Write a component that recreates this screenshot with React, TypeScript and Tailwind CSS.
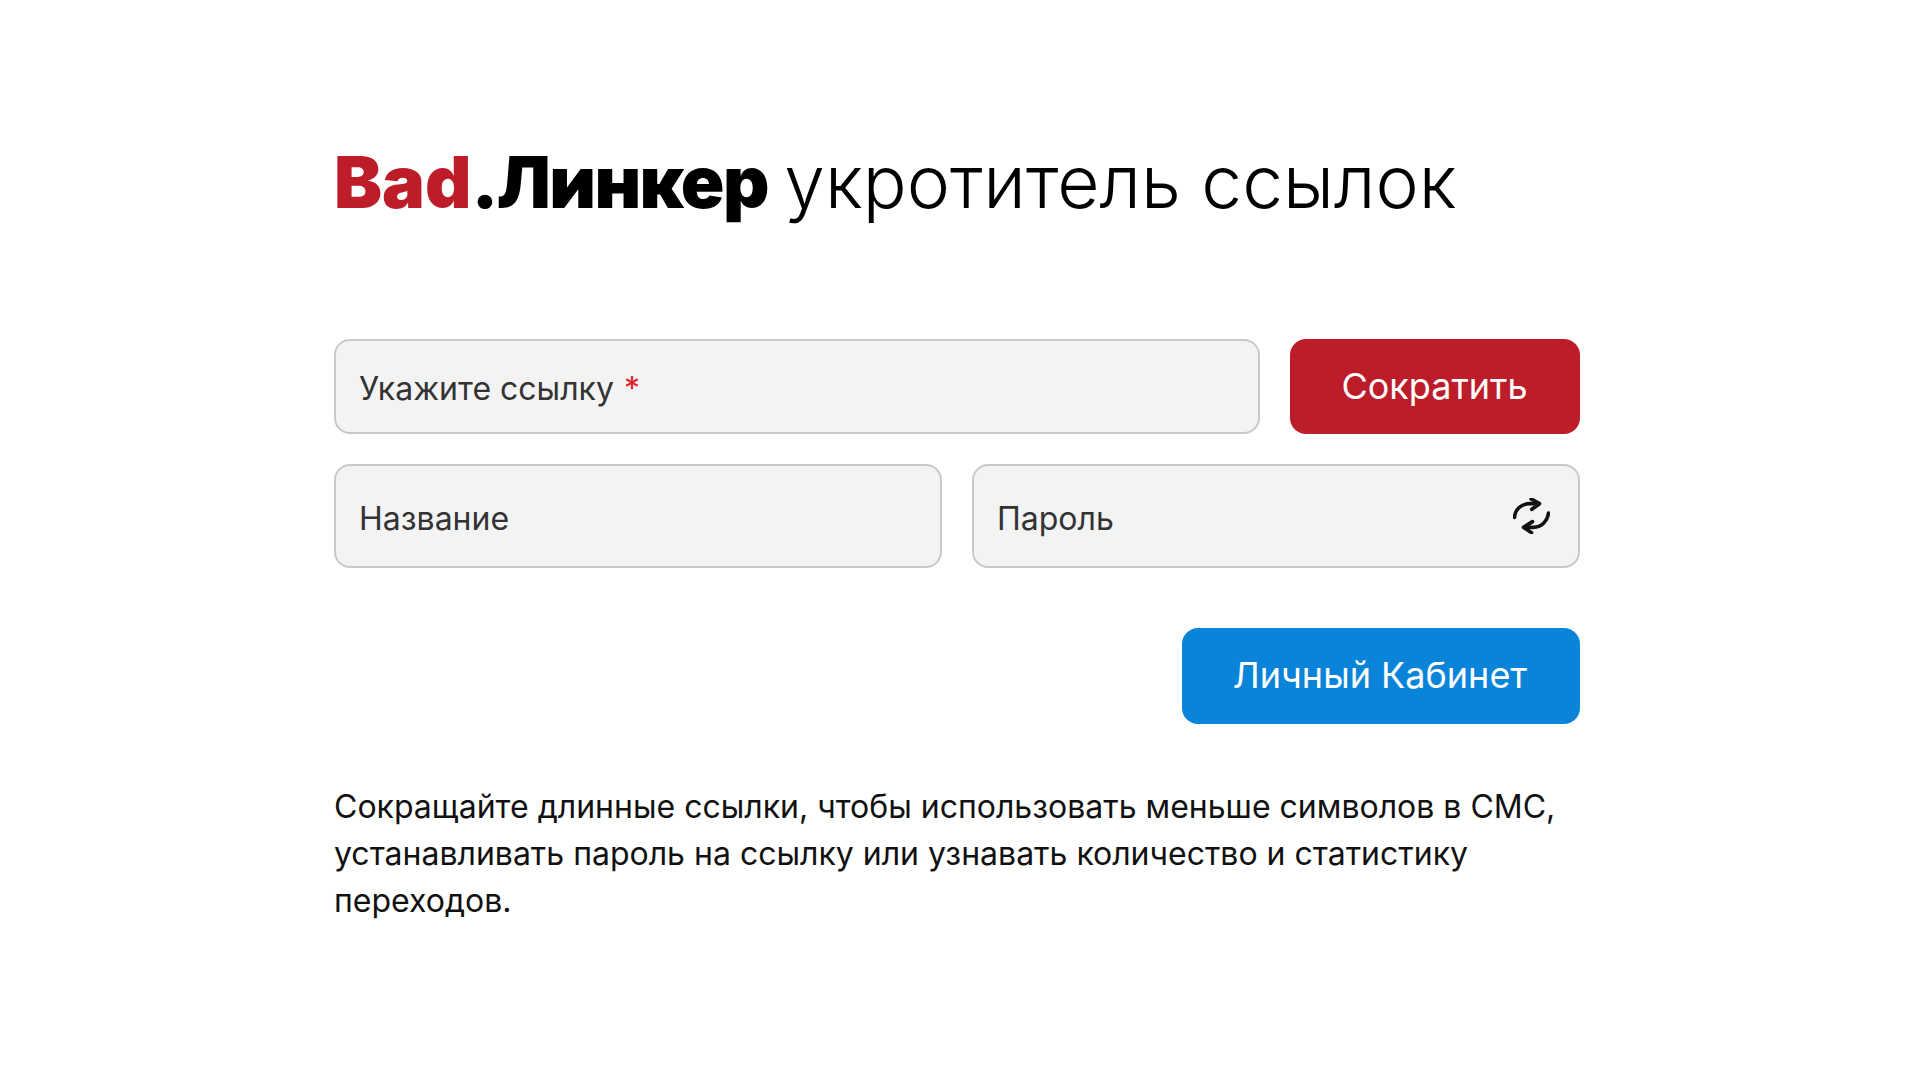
const inter = "font-['Inter','Noto_Sans',sans-serif]"

function RegenIcon() {
    return (
        <svg viewBox="0 0 110 108" className="w-[37px] h-[36px]" fill="none" stroke="#111" strokeWidth="11" strokeLinecap="round" strokeLinejoin="round">
            <path d="M4 58C6 34 24 17 50 17L76 17" />
            <path d="M54 3L79 17L56 34" />
            <path d="M106 45C103 70 85 88 60 88L34 88" />
            <path d="M58 71L31 88L55 104" />
        </svg>
    )
}

export default function App() {
    return (
        <div className={`${inter} w-[1920px] h-[1080px] bg-white overflow-hidden pl-[334px] pt-[141px]`}>
            <div className="w-[1246px]">
                <h1 className="text-[73px] leading-[82px] font-light text-black whitespace-nowrap">
                    <span className="text-[72px] font-black text-[#bd1c29]">Bad</span>
                    <span className="text-[72px] font-black tracking-[-1.6px] mr-[-4px]">.Линкер</span> укротитель ссылок
                </h1>

                <div className="flex gap-[30px] mt-[116px]">
                    <div className="flex-1 h-[95px] rounded-[16px] border-2 border-[#c9c9c9] bg-[#f3f3f3] flex items-center pl-[23px] pt-[4px] text-[32px] text-[#333]">
                        Укажите ссылку <span className="ml-[10px] text-[#e0202a]">*</span>
                    </div>
                    <button className="w-[290px] h-[95px] rounded-[16px] bg-[#bd1c29] text-white text-[36px] pb-[2px] pr-[1px]">Сократить</button>
                </div>

                <div className="grid grid-cols-2 gap-[30px] mt-[30px]">
                    <div className="h-[104px] rounded-[16px] border-2 border-[#c9c9c9] bg-[#f3f3f3] flex items-center pl-[23px] pt-[6px] text-[32px] text-[#333]">
                        Название
                    </div>
                    <div className="h-[104px] rounded-[16px] border-2 border-[#c9c9c9] bg-[#f3f3f3] flex items-center justify-between pl-[23px] pr-[28px] text-[32px] text-[#333]">
                        <span className="pt-[6px]">Пароль</span>
                        <RegenIcon />
                    </div>
                </div>

                <div className="flex justify-end mt-[60px]">
                    <button className="w-[398px] h-[96px] rounded-[16px] bg-[#0a84d8] text-white text-[36px] pb-[2px] pr-[2px]">Личный Кабинет</button>
                </div>

                <p className="mt-[59px] text-[32px] leading-[47px] text-[#111]">
                    Сокращайте длинные ссылки, чтобы использовать меньше символов в СМС, устанавливать пароль на ссылку или узнавать количество и статистику переходов.
                </p>
            </div>
        </div>
    )
}
